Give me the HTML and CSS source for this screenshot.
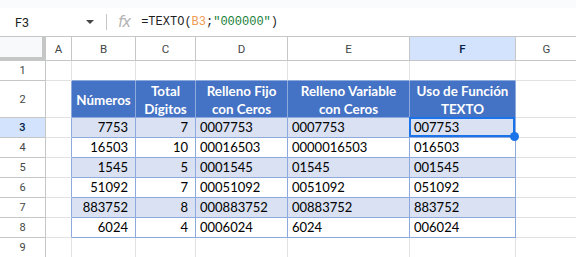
FILE: index.html
```html
<!DOCTYPE html>
<html>
<head>
<link rel="stylesheet" href="styles.css">
</head>
<body>
 <div class="top-strip"></div>

 <div class="formula-bar">
   <div class="name-box">
     <span class="cell-ref">F3</span>
     <span class="caret"></span>
   </div>
   <div class="sep"></div>
   <span class="fx">fx</span>
   <span class="formula">=TEXTO(<span class="ref">B3</span>;<span class="str">"000000"</span>)</span>
 </div>

 <div class="sheet">
   <!-- column headers -->
   <div class="corner"></div>
   <div class="col-h">A</div>
   <div class="col-h">B</div>
   <div class="col-h">C</div>
   <div class="col-h">D</div>
   <div class="col-h">E</div>
   <div class="col-h sel">F</div>
   <div class="col-h">G</div>

   <!-- row 1 -->
   <div class="row-h">1</div>
   <div class="c"></div>
   <div class="c above"></div>
   <div class="c above"></div>
   <div class="c above"></div>
   <div class="c above"></div>
   <div class="c above"></div>
   <div class="c"></div>

   <!-- row 2: table header -->
   <div class="row-h">2</div>
   <div class="c before"></div>
   <div class="th">Números</div>
   <div class="th">Total<br>Dígitos</div>
   <div class="th">Relleno Fijo<br>con Ceros</div>
   <div class="th">Relleno Variable<br>con Ceros</div>
   <div class="th">Uso de Función<br>TEXTO</div>
   <div class="c"></div>

   <!-- row 3 -->
   <div class="row-h sel">3</div>
   <div class="c before"></div>
   <div class="td alt num">7753</div>
   <div class="td alt num">7</div>
   <div class="td alt">0007753</div>
   <div class="td alt">0007753</div>
   <div class="td alt active">007753<span class="sel-box"><span class="handle"></span></span></div>
   <div class="c"></div>

   <!-- row 4 -->
   <div class="row-h">4</div>
   <div class="c before"></div>
   <div class="td num">16503</div>
   <div class="td num">10</div>
   <div class="td">00016503</div>
   <div class="td">0000016503</div>
   <div class="td">016503</div>
   <div class="c"></div>

   <!-- row 5 -->
   <div class="row-h">5</div>
   <div class="c before"></div>
   <div class="td alt num">1545</div>
   <div class="td alt num">5</div>
   <div class="td alt">0001545</div>
   <div class="td alt">01545</div>
   <div class="td alt">001545</div>
   <div class="c"></div>

   <!-- row 6 -->
   <div class="row-h">6</div>
   <div class="c before"></div>
   <div class="td num">51092</div>
   <div class="td num">7</div>
   <div class="td">00051092</div>
   <div class="td">0051092</div>
   <div class="td">051092</div>
   <div class="c"></div>

   <!-- row 7 -->
   <div class="row-h">7</div>
   <div class="c before"></div>
   <div class="td alt num">883752</div>
   <div class="td alt num">8</div>
   <div class="td alt">000883752</div>
   <div class="td alt">00883752</div>
   <div class="td alt">883752</div>
   <div class="c"></div>

   <!-- row 8 -->
   <div class="row-h">8</div>
   <div class="c before"></div>
   <div class="td num">6024</div>
   <div class="td num">4</div>
   <div class="td">0006024</div>
   <div class="td">6024</div>
   <div class="td">006024</div>
   <div class="c"></div>

   <!-- row 9 -->
   <div class="row-h">9</div>
   <div class="c"></div>
   <div class="c"></div>
   <div class="c"></div>
   <div class="c"></div>
   <div class="c"></div>
   <div class="c"></div>
   <div class="c"></div>
 </div>
</body>
</html>
```

FILE: styles.css
```css
/* Page */
body {
 margin: 0;
 width: 576px;
 height: 257px;
 overflow: hidden;
 background: white;
 font-family: Roboto, "Liberation Sans", sans-serif;
}

.top-strip {
 height: 8px;
 background: #f9fbfd;
}

/* Formula bar */
.formula-bar {
 height: 28px;
 display: flex;
 align-items: center;
 background: white;
}

.name-box {
 width: 106px;
 display: flex;
 align-items: center;
 padding-left: 15px;
 box-sizing: border-box;
}

.cell-ref {
 font-size: 12.5px;
 color: #1f1f1f;
 flex: 1;
}

.caret {
 width: 0;
 height: 0;
 border-left: 4px solid transparent;
 border-right: 4px solid transparent;
 border-top: 4px solid #444746;
 margin-right: 12px;
}

.sep {
 width: 1px;
 height: 16px;
 background: #c4c7c5;
}

.fx {
 font-family: "DejaVu Sans", sans-serif;
 font-style: italic;
 font-size: 15px;
 color: #b4b4b4;
 margin-left: 11px;
 margin-right: 11px;
 letter-spacing: -1px;
}

.formula {
 font-family: "Liberation Mono", monospace;
 font-size: 12px;
 color: #1f1f1f;
}
.formula .ref { color: #f09a52; }
.formula .str { color: #188038; }

/* Grid */
.sheet {
 display: grid;
 grid-template-columns: 46px 26px 64px 60px 92px 122px 106px 62px;
 grid-template-rows: 25px 20px 37px repeat(7, 20px);
}

.sheet > div {
 box-sizing: border-box;
 border-right: 1px solid #e2e2e2;
 border-bottom: 1px solid #e2e2e2;
}

.corner {
 background: #f8f9fa;
 border-top: 1px solid #c4c7c5;
 border-right: 4px solid #c4c7c5 !important;
 border-bottom: 4px solid #c4c7c5 !important;
}

.col-h,
.row-h {
 display: flex;
 align-items: center;
 justify-content: center;
 font-size: 11px;
 color: #444746;
 border-color: #c4c7c5 !important;
}

.col-h {
 border-top: 1px solid #c4c7c5;
 font-size: 11.5px;
}

.sel {
 background: #d3e3fd;
 color: #041e49;
 font-weight: 500;
}

.c.above { border-bottom-color: #8ea9db; }
.c.before { border-right-color: #8ea9db; }

/* Data table */
.th,
.td {
 font-family: Lato, "Open Sans", sans-serif;
 border-color: #8ea9db !important;
}

.th {
 background: #4472c4;
 color: white;
 font-weight: bold;
 font-size: 13.4px;
 line-height: 18px;
 text-align: center;
 display: flex;
 align-items: center;
 justify-content: center;
 padding-top: 2px;
}

.td {
 font-size: 13px;
 line-height: 19px;
 color: #000;
 padding-left: 4px;
 white-space: nowrap;
}

.td.alt { background: #d9e1f2; }
.td.num {
 text-align: right;
 padding-left: 0;
 padding-right: 7px;
}

.active { position: relative; }

.sel-box {
 position: absolute;
 top: -1px;
 left: -1px;
 right: 0;
 bottom: 0;
 border: 2px solid #1a73e8;
}

.handle {
 position: absolute;
 right: -6px;
 bottom: -6px;
 width: 9px;
 height: 9px;
 border-radius: 50%;
 background: #1a73e8;
}
```
